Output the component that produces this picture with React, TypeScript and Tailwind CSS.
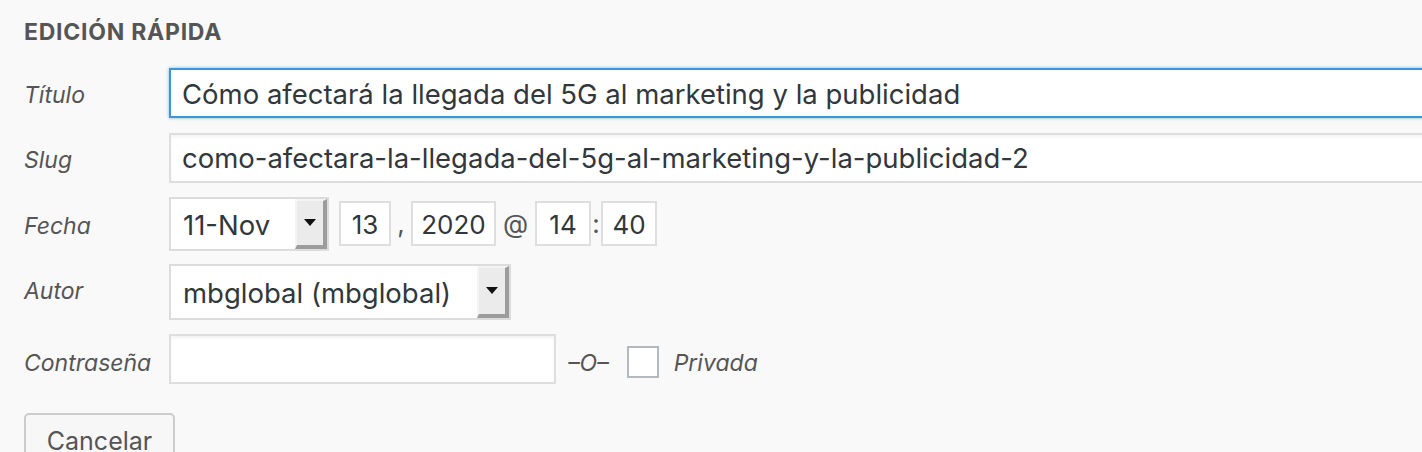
import React from 'react';

const font = { fontFamily: 'Inter, "Noto Sans", sans-serif' };

function SelectBox({ value, width }: { value: string; width: string }) {
  return (
    <div
      className={`flex items-stretch border-2 border-[#dcdcdc] bg-white ${width}`}
    >
      <div className="flex flex-1 items-center pl-[12px] pt-[4px] text-[27.5px] text-[#32373c]">
        {value}
      </div>
      <div className="flex w-[32px] items-center justify-center border-t-2 border-l-2 border-r-[4px] border-b-[4px] border-t-[#f4f4f4] border-l-[#f4f4f4] border-r-[#9c9c9c] border-b-[#9c9c9c] bg-[#ebebeb]">
        <svg width="12" height="7" viewBox="0 0 12 7">
          <path d="M0 0 H12 L6 7 Z" fill="#111" />
        </svg>
      </div>
    </div>
  );
}

function SmallInput({ value, width }: { value: string; width: string }) {
  return (
    <div
      className={`flex h-[45px] items-center justify-center border-2 border-[#dedede] bg-white pt-[2px] text-[26px] text-[#32373c] ${width}`}
    >
      {value}
    </div>
  );
}

export default function App() {
  return (
    <div className="h-[452px] w-[1422px] overflow-hidden bg-[#f9f9f9]" style={font}>
      <div className="pl-[24px] pt-[15px]">
        <h2 className="text-[23px] font-bold tracking-[0.75px] text-[#555]">EDICIÓN RÁPIDA</h2>

        {/* Título */}
        <div className="mt-[18px] flex items-center">
          <label className="w-[145px] pt-[5px] text-[23px] italic text-[#555]">Título</label>
          <div className="flex h-[50px] flex-1 items-center border-2 border-[#3b96dc] bg-white pl-[11px] pt-[4px] text-[27.5px] text-[#32373c] shadow-[0_0_3px_rgba(30,140,190,0.6)] -mr-[4px]">
            Cómo afectará la llegada del 5G al marketing y la publicidad
          </div>
        </div>

        {/* Slug */}
        <div className="mt-[15px] flex items-center">
          <label className="w-[145px] pt-[6px] text-[23px] italic text-[#555]">Slug</label>
          <div className="flex h-[50px] flex-1 items-center border-2 border-[#dedede] bg-white pl-[11px] pt-[3px] text-[27.5px] text-[#32373c] shadow-[inset_0_2px_3px_rgba(0,0,0,0.05)] -mr-[4px]">
            como-afectara-la-llegada-del-5g-al-marketing-y-la-publicidad-2
          </div>
        </div>

        {/* Fecha */}
        <div className="mt-[14px] flex items-center">
          <label className="w-[145px] pt-[6px] text-[23px] italic text-[#555]">Fecha</label>
          <div className="flex items-center text-[26px] text-[#555]">
            <SelectBox value="11-Nov" width="w-[160px] h-[54px]" />
            <div className="ml-[10px]">
              <SmallInput value="13" width="w-[52px]" />
            </div>
            <span className="w-[20px] text-center">,</span>
            <SmallInput value="2020" width="w-[85px]" />
            <span className="w-[39px] text-center">@</span>
            <SmallInput value="14" width="w-[56px]" />
            <span className="w-[10px] text-center">:</span>
            <SmallInput value="40" width="w-[56px]" />
          </div>
        </div>

        {/* Autor */}
        <div className="mt-[13px] flex items-center">
          <label className="w-[145px] pb-[1px] text-[23px] italic text-[#555]">Autor</label>
          <SelectBox value="mbglobal (mbglobal)" width="w-[342px] h-[56px]" />
        </div>

        {/* Contraseña */}
        <div className="mt-[14px] flex items-center">
          <label className="w-[145px] pt-[9px] text-[23px] italic text-[#555]">Contraseña</label>
          <div className="h-[50px] w-[387px] border-2 border-[#dedede] bg-white shadow-[inset_0_2px_3px_rgba(0,0,0,0.05)]" />
          <span className="ml-[12px] pt-[9px] text-[23px] italic text-[#555]">–O–</span>
          <span className="ml-[18px] mt-[6px] h-[32px] w-[32px] border-2 border-[#b4b9be] bg-white" />
          <span className="ml-[15px] pt-[9px] text-[23px] italic text-[#555]">Privada</span>
        </div>

        {/* Cancelar */}
        <div className="mt-[29px]">
          <button className="h-[56px] w-[151px] rounded-[5px] border-2 border-[#cccccc] bg-[#f7f7f7] pt-[2px] text-[25px] text-[#555] shadow-[0_2px_0_#ccc]">
            Cancelar
          </button>
        </div>
      </div>
    </div>
  );
}
